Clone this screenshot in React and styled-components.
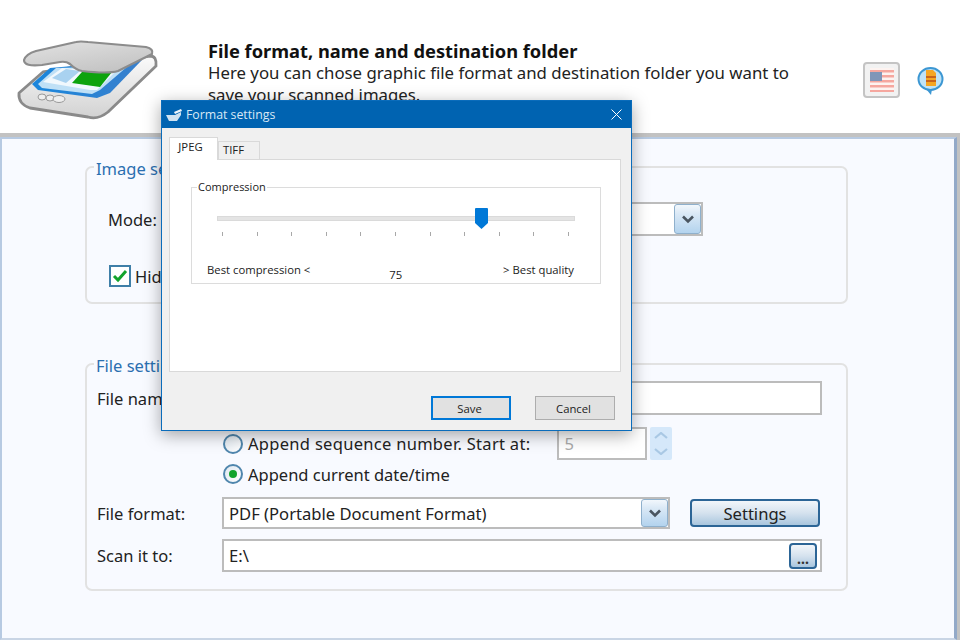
import React from "react";
import styled, { createGlobalStyle } from "styled-components";

const GlobalStyle = createGlobalStyle`
  html, body { margin: 0; padding: 0; background: #fff; }
  body { font-family: "Noto Sans", "Liberation Sans", sans-serif; color: #222; }
  * { box-sizing: border-box; }
`;

const Page = styled.div`
  position: relative;
  width: 960px;
  height: 640px;
  overflow: hidden;
  background: #fff;
`;

const Header = styled.header`
  display: flex;
  height: 137px;
  padding: 40px 0 0 17px;
  background: #fff;
  border-bottom: 4px solid #c2c2c2;
`;

const Logo = styled.svg`
  flex: none;
  width: 145px;
  height: 82px;
`;

const Intro = styled.div`
  width: 610px;
  margin-left: 46px;
`;

const IntroTitle = styled.h1`
  margin: 0 0 1px;
  font: 700 18.3px/21px "Noto Sans", sans-serif;
  color: #111;
`;

const IntroText = styled.p`
  margin: 0;
  font-size: 16.8px;
  line-height: 22px;
  color: #222;
`;

const HeaderTools = styled.div`
  display: flex;
  align-items: center;
  gap: 17px;
  height: 36px;
  margin: 22px 0 0 45px;
`;

const FlagButton = styled.div`
  display: flex;
  align-items: center;
  justify-content: center;
  width: 37px;
  height: 36px;
  background: #f2f2f2;
  border: 2px solid #c4c4c4;
  border-radius: 4px;
`;

const MainFrame = styled.div`
  height: 503px;
  padding-right: 3px;
  background: #c2c2c2;
`;

const Main = styled.main`
  height: 100%;
  padding: 15px 0 0 83px;
  background: #f8faff;
  border: 2px solid #b7cae2;
  border-right: 3px solid #93a9c8;
  border-bottom-color: #c9d5e5;
`;

const Group = styled.fieldset`
  margin: 0 0 47px 0;
  padding: ${(p) => p.$pad};
  height: ${(p) => p.$height}px;
  width: 763px;
  border: 2px solid #e2e2e2;
  border-radius: 7px;
`;

/* taller on top so the text sits a little under the group's border, as in the reference */
const GroupTitle = styled.legend`
  margin-left: ${(p) => p.$shift}px;
  padding: 4px 2px 0;
  font-size: 16.5px;
  line-height: 22px;
  color: #2a6fb0;
`;

const Row = styled.div`
  display: flex;
  align-items: center;
  height: ${(p) => p.$height}px;
  margin-top: ${(p) => p.$top || 0}px;
  padding-left: ${(p) => p.$indent || 0}px;
`;

const Label = styled.label`
  width: ${(p) => p.$width}px;
  flex: none;
  font-size: 16.5px;
  color: #222;
`;

const Field = styled.div`
  position: relative;
  display: flex;
  align-items: center;
  width: ${(p) => p.$width}px;
  height: ${(p) => p.$height}px;
  margin-left: ${(p) => p.$gap || 0}px;
  padding-left: 5px;
  background: #fff;
  border: 2px solid #bcbcbc;
  font-size: 16.6px;
  color: ${(p) => (p.$muted ? "#aaa" : "#222")};
`;

const ArrowButton = styled.div`
  position: absolute;
  top: 0;
  right: 0;
  bottom: 0;
  width: 27px;
  display: flex;
  align-items: center;
  justify-content: center;
  background: linear-gradient(#f2f7fc 0%, #dbe9f6 30%, #b3d3ee 100%);
  border: 1px solid #8fb0cc;
  border-radius: 3px;
`;

const Check = styled.div`
  display: flex;
  align-items: center;
  justify-content: center;
  width: 22px;
  height: 22px;
  margin-right: 4px;
  background: #fff;
  border: 2px solid #3f7fa8;
`;

const Option = styled.span`
  font-size: 16.5px;
  letter-spacing: ${(p) => (p.$wide ? "0.3px" : "0")};
  color: #222;
`;

const Radio = styled.div`
  display: flex;
  align-items: center;
  justify-content: center;
  width: 20px;
  height: 20px;
  margin-right: 5px;
  background: linear-gradient(135deg, #dfe8f0, #fff);
  border: 2px solid #4f86ad;
  border-radius: 50%;

  &::after {
    content: "";
    display: ${(p) => (p.$on ? "block" : "none")};
    width: 8px;
    height: 8px;
    border-radius: 50%;
    background: #12a32c;
  }
`;

const Spinner = styled.div`
  display: flex;
  flex-direction: column;
  align-items: center;
  justify-content: space-around;
  width: 22px;
  height: 33px;
  margin-left: 3px;
  background: #d5e8fa;
  border-radius: 2px;
`;

const SettingsButton = styled.button`
  width: 130px;
  height: 28px;
  margin-left: 20px;
  padding: 0;
  background: linear-gradient(#f2f6fa 0%, #d5e2ee 50%, #a9c6de 100%);
  border: 2px solid #2c6596;
  border-radius: 4px;
  font: 16.6px "Noto Sans", sans-serif;
  color: #222;
`;

const BrowseButton = styled.div`
  position: absolute;
  top: 2px;
  right: 3px;
  width: 28px;
  height: 26px;
  padding-top: 4px;
  text-align: center;
  background: linear-gradient(#f2f6fa 0%, #d5e2ee 50%, #a9c6de 100%);
  border: 2px solid #2c6596;
  border-radius: 4px;
  font-size: 14px;
  font-weight: 700;
  line-height: 20px;
  color: #333;
`;

/* the dialog floats above the main window */
const Dialog = styled.section`
  position: absolute;
  left: 161px;
  top: 100px;
  width: 471px;
  height: 331px;
  display: flex;
  flex-direction: column;
  background: #f0f0f0;
  border: 1px solid #0a6cbb;
  box-shadow: 0 4px 16px rgba(0, 0, 0, 0.35);
  font-family: "Open Sans", "Noto Sans", sans-serif;
  font-size: 11.3px;
  color: #222;
`;

const TitleBar = styled.div`
  display: flex;
  align-items: center;
  flex: none;
  height: 27px;
  padding: 0 9px 0 3px;
  background: #0063b1;
  color: #d8e8f5;
  font-size: 12.3px;
`;

const TitleText = styled.span`
  flex: 1;
  margin-left: 3px;
`;

const Tabs = styled.div`
  display: flex;
  align-items: flex-end;
  flex: none;
  height: 31px;
  padding-left: 7px;
`;

const Tab = styled.div`
  display: flex;
  align-items: center;
  justify-content: center;
  width: ${(p) => p.$width}px;
  height: ${(p) => (p.$active ? 23 : 19)}px;
  padding: 0 ${(p) => (p.$active ? 6 : 11)}px ${(p) => (p.$active ? 5 : 2)}px 0;
  margin-bottom: -1px;
  background: ${(p) => (p.$active ? "#fff" : "#f0f0f0")};
  border: 1px solid #d9d9d9;
  border-bottom: ${(p) => (p.$active ? "none" : "1px solid #d9d9d9")};
  z-index: ${(p) => (p.$active ? 1 : 0)};
`;

const TabPanel = styled.div`
  width: 452px;
  height: 213px;
  margin-left: 7px;
  padding: 19px 19px 0 21px;
  background: #fff;
  border: 1px solid #d9d9d9;
`;

const Compression = styled.fieldset`
  width: 410px;
  height: 105px;
  margin: 0;
  padding: 0 25px 0 15px;
  border: 1px solid #dcdcdc;
`;

const CompressionTitle = styled.legend`
  margin-left: -10px;
  padding: 0 1px;
  font-size: 11px;
  line-height: 16px;
`;

const Slider = styled.div`
  position: relative;
  width: 358px;
  height: 32px;
  margin: 21px 0 0 10px;
`;

const Track = styled.div`
  height: 5px;
  margin-top: 9px;
  background: #e4e4e4;
  border: 1px solid #dadada;
`;

const Ticks = styled.div`
  display: flex;
  justify-content: space-between;
  margin: 11px 6px 0 5px;
`;

const Tick = styled.i`
  display: block;
  width: 1px;
  height: 4px;
  background: #a8a8a8;
`;

const Thumb = styled.svg`
  position: absolute;
  top: -8px;
`;

const Scale = styled.div`
  display: flex;
  justify-content: space-between;
  margin-top: 14px;
  padding-right: 1px;
`;

const ScaleValue = styled.span`
  margin: 5px 22px 0 0;
`;

const Actions = styled.div`
  display: flex;
  justify-content: flex-end;
  gap: 24px;
  padding: 24px 16px 0 0;
`;

const DialogButton = styled.button`
  width: 80px;
  height: 24px;
  padding: 0 3px 0 0;
  background: #e1e1e1;
  border: ${(p) => (p.$primary ? "2px solid #0078d7" : "1px solid #adadad")};
  font: 11.3px "Open Sans", sans-serif;
  color: #222;
`;

const TICKS = Array.from({ length: 11 });
const QUALITY = 75;

const ScannerLogo = () => (
  <Logo viewBox="17 40 145 82">
    <defs>
      <linearGradient id="bodyFill" x1="0" y1="0" x2="0" y2="1">
        <stop offset="0" stopColor="#fbfbfb" />
        <stop offset="1" stopColor="#d2d2d2" />
      </linearGradient>
      <linearGradient id="lidFill" x1="0" y1="0" x2="0.6" y2="1">
        <stop offset="0" stopColor="#e2e2e2" />
        <stop offset="1" stopColor="#c4c4c4" />
      </linearGradient>
      <linearGradient id="glassFill" x1="0" y1="0" x2="1" y2="0">
        <stop offset="0" stopColor="#1a86dc" />
        <stop offset="1" stopColor="#3a80cc" />
      </linearGradient>
      <filter id="soft">
        <feGaussianBlur stdDeviation="0.5" />
      </filter>
    </defs>
    <g filter="url(#soft)">
      <path
        d="M19 93 L43 72 L150 56 Q157 56 156 66 L108 112 Q98 120 88 117 L30 108 Q18 104 19 93 Z"
        fill="url(#bodyFill)"
        stroke="#8a8a8a"
        strokeWidth="2.8"
        strokeLinejoin="round"
      />
      <path d="M32 84 L50 68 L142 60 L110 93 L97 98 L38 90 Z" fill="url(#glassFill)" />
      <path d="M38 84 L56 68 L128 66 L100 90 L92 94 L42 88 Z" fill="#bfe0f6" />
      <path d="M43 82 L62 68 L115 72 L97 90 L90 90 Z" fill="#f1f8fd" />
      <path d="M52 78 L66 69 L80 71 L66 83 Z" fill="#a9d2f0" />
      <path d="M72 83 L82 72 L112 72 L100 87 Z" fill="#07a30c" />
      <path
        d="M24 60 Q26 54 36 51 L76 42 Q80 41 88 42 L146 47 Q154 49 152 54 L118 71 Q108 74 82 71 Q76 70 70 64 Q66 61 60 62 L42 65 Q24 67 24 60 Z"
        fill="url(#lidFill)"
        stroke="#8c8c8c"
        strokeWidth="2.2"
        strokeLinejoin="round"
      />
      <ellipse cx="42" cy="97" rx="4" ry="3" fill="#eee" stroke="#999" />
      <ellipse cx="50" cy="98" rx="4" ry="3" fill="#eee" stroke="#999" />
      <ellipse cx="59" cy="99" rx="6" ry="3.5" fill="#eee" stroke="#999" />
    </g>
  </Logo>
);

const FlagIcon = () => (
  <svg width="24" height="24" viewBox="0 0 24 24">
    <g filter="blur(0.6px)">
      <rect width="24" height="24" fill="#fdf3f0" />
      {[2, 7, 12, 17, 22].map((y) => (
        <rect key={y} y={y} width="24" height="2.5" fill="#f5a79f" />
      ))}
      <rect y="4" width="12" height="9" fill="#7f96b8" />
    </g>
  </svg>
);

const HelpIcon = () => (
  <svg width="27" height="29" viewBox="0 0 27 29">
    <ellipse cx="13.5" cy="13" rx="12" ry="11" fill="#bfe3f7" stroke="#3c97d3" strokeWidth="2" />
    <path d="M9 23 L14 29 L15 23 Z" fill="#3c97d3" />
    <path d="M9 4 H16 L19 7 V20 H9 Z" fill="#f5a623" />
    <path d="M9 11 H19 M9 15 H19" stroke="#c9641a" strokeWidth="2" />
  </svg>
);

const Chevron = () => (
  <svg width="14" height="9" viewBox="0 0 14 9">
    <path d="M2 1.5 L7 6.5 L12 1.5" fill="none" stroke="#4a5560" strokeWidth="2.6" />
  </svg>
);

const SpinArrow = ({ up }) => (
  <svg width="14" height="7" viewBox="0 0 14 7">
    <path d={up ? "M1 6 L7 1 L13 6" : "M1 1 L7 6 L13 1"} fill="none" stroke="#a9c8e4" strokeWidth="2.2" />
  </svg>
);

const SmallScanner = () => (
  <svg width="18" height="14" viewBox="0 0 18 14">
    <path d="M1 7 H10 L16 4 V7 L12 13 H4 Z" fill="#cfe2f1" />
    <path d="M9 4 L16 1 L17 3 L10 6 Z" fill="#eef5fb" />
  </svg>
);

const CloseIcon = () => (
  <svg width="11" height="11" viewBox="0 0 11 11">
    <path d="M0.5 0.5 L10.5 10.5 M10.5 0.5 L0.5 10.5" stroke="#fff" strokeWidth="1" />
  </svg>
);

export default function App() {
  return (
    <Page>
      <GlobalStyle />
      <Header>
        <ScannerLogo />
        <Intro>
          <IntroTitle>File format, name and destination folder</IntroTitle>
          <IntroText>
            Here you can chose graphic file format and destination folder you want to
            save your scanned images.
          </IntroText>
        </Intro>
        <HeaderTools>
          <FlagButton>
            <FlagIcon />
          </FlagButton>
          <HelpIcon />
        </HeaderTools>
      </Header>

      <MainFrame>
        <Main>
          <Group $height={150} $pad="22px 0 0 21px">
            <GroupTitle $shift={-14}>Image settings</GroupTitle>
            <Row $height={34}>
              <Label $width={114}>Mode:</Label>
              <Field $width={481} $height={34}>
                <ArrowButton>
                  <Chevron />
                </ArrowButton>
              </Field>
            </Row>
            <Row $height={24} $top={28} $indent={1}>
              <Check>
                <svg width="16" height="14" viewBox="0 0 16 14">
                  <path d="M2 7 L6 11 L14 2" fill="none" stroke="#12a32c" strokeWidth="3" />
                </svg>
              </Check>
              <Option>Hide</Option>
            </Row>
          </Group>

          <Group $height={240} $pad="4px 0 0 10px">
            <GroupTitle $shift={-3}>File settings</GroupTitle>
            <Row $height={34}>
              <Label $width={125}>File name:</Label>
              <Field $width={600} $height={34} />
            </Row>
            <Row $height={33} $top={12} $indent={126}>
              <Radio />
              <Option $wide>Append sequence number. Start at:</Option>
              <Field $width={90} $height={33} $muted $gap={27}>
                5
              </Field>
              <Spinner>
                <SpinArrow up />
                <SpinArrow />
              </Spinner>
            </Row>
            <Row $height={24} $top={2} $indent={126}>
              <Radio $on />
              <Option>Append current date/time</Option>
            </Row>
            <Row $height={32} $top={11}>
              <Label $width={125}>File format:</Label>
              <Field $width={448} $height={32}>
                PDF (Portable Document Format)
                <ArrowButton>
                  <Chevron />
                </ArrowButton>
              </Field>
              <SettingsButton>Settings</SettingsButton>
            </Row>
            <Row $height={33} $top={10}>
              <Label $width={125}>Scan it to:</Label>
              <Field $width={600} $height={33}>
                E:\
                <BrowseButton>...</BrowseButton>
              </Field>
            </Row>
          </Group>
        </Main>
      </MainFrame>

      <Dialog>
        <TitleBar>
          <SmallScanner />
          <TitleText>Format settings</TitleText>
          <CloseIcon />
        </TitleBar>
        <Tabs>
          <Tab $active $width={49}>JPEG</Tab>
          <Tab $width={42}>TIFF</Tab>
        </Tabs>
        <TabPanel>
          <Compression>
            <CompressionTitle>Compression</CompressionTitle>
            <Slider>
              <Track />
              <Ticks>
                {TICKS.map((_, i) => (
                  <Tick key={i} />
                ))}
              </Ticks>
              <Thumb
                width="13"
                height="21"
                viewBox="0 0 13 21"
                style={{ left: `${(QUALITY / 100) * 347 - 2}px` }}
              >
                <path d="M0 1 Q0 0 1 0 H12 Q13 0 13 1 V15 L6.5 21 L0 15 Z" fill="#0078d7" />
              </Thumb>
            </Slider>
            <Scale>
              <span>Best compression &lt;</span>
              <ScaleValue>{QUALITY}</ScaleValue>
              <span>&gt; Best quality</span>
            </Scale>
          </Compression>
        </TabPanel>
        <Actions>
          <DialogButton $primary>Save</DialogButton>
          <DialogButton>Cancel</DialogButton>
        </Actions>
      </Dialog>
    </Page>
  );
}
